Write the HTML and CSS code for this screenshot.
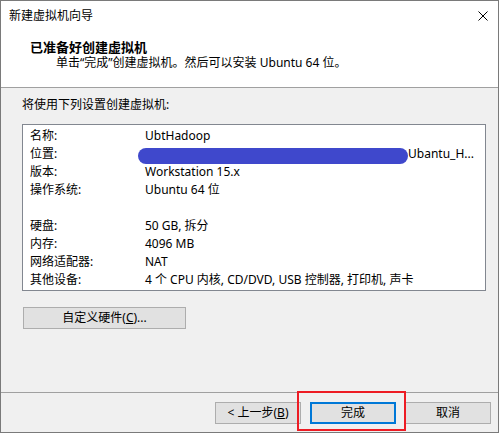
FILE: index.html
```html
<!DOCTYPE html>
<html lang="zh-CN">
<head>
<meta charset="utf-8">
<title>新建虚拟机向导</title>
<link rel="stylesheet" href="styles.css">
</head>
<body>
<div class="window">
  <div class="top">
    <div class="titlebar">
      <span class="title">新建虚拟机向导</span>
      <svg class="close" width="10" height="10" viewBox="0 0 10 10"><path d="M0.5 0.5 L9.5 9.5 M9.5 0.5 L0.5 9.5" stroke="#000" stroke-width="1" fill="none"/></svg>
    </div>
    <div class="header">
      <div class="heading">已准备好创建虚拟机</div>
      <div class="sub">单击“完成”创建虚拟机。然后可以安装 Ubuntu 64 位。</div>
    </div>
  </div>
  <div class="main">
    <div class="intro">将使用下列设置创建虚拟机:</div>
    <div class="summary">
      <div class="row"><span class="label">名称:</span><span class="value">UbtHadoop</span></div>
      <div class="row"><span class="label">位置:</span><span class="value"><span class="redact"></span>Ubantu_H...</span></div>
      <div class="row"><span class="label">版本:</span><span class="value">Workstation 15.x</span></div>
      <div class="row"><span class="label">操作系统:</span><span class="value">Ubuntu 64 位</span></div>
      <div class="spacer"></div>
      <div class="row"><span class="label">硬盘:</span><span class="value">50 GB, 拆分</span></div>
      <div class="row"><span class="label">内存:</span><span class="value">4096 MB</span></div>
      <div class="row"><span class="label">网络适配器:</span><span class="value">NAT</span></div>
      <div class="row"><span class="label">其他设备:</span><span class="value">4 个 CPU 内核, CD/DVD, USB 控制器, 打印机, 声卡</span></div>
    </div>
    <div class="btn custom">自定义硬件(<u>C</u>)...</div>
  </div>
  <div class="footer">
    <div class="btn nav">&lt; 上一步(<u>B</u>)</div>
    <div class="btn nav primary">完成</div>
    <div class="btn nav">取消</div>
  </div>
  <div class="highlight"></div>
</div>
</body>
</html>
```

FILE: styles.css
```css
* { box-sizing: border-box; }
html, body { margin: 0; padding: 0; background: #f0f0f0; }
body {
  font-family: "Noto Sans", "Noto Sans CJK SC", sans-serif;
  font-size: 12px;
  color: #000;
}
.window {
  position: relative;
  width: 499px;
  height: 433px;
  border: 1px solid #7a7a7a;
  background: #f0f0f0;
  display: flex;
  flex-direction: column;
}
.top {
  background: #fff;
  border-bottom: 1px solid #a0a0a0;
  height: 87px;
}
.titlebar {
  height: 29px;
  display: flex;
  align-items: center;
  justify-content: space-between;
  padding: 1px 10px 0 8px;
}
.title { line-height: 28px; }
.close { display: block; }
.header { padding: 9px 0 0 29px; }
.heading { font-weight: bold; font-size: 13px; line-height: 16px; }
.sub { line-height: 16px; padding-left: 26px; }
.main {
  flex: 1;
  padding: 9px 12px 0 21px;
}
.intro { line-height: 16px; }
.summary {
  margin-top: 11px;
  width: 464px;
  height: 167px;
  background: #fff;
  border: 1px solid #828790;
  padding: 2px 0 0 7px;
  overflow: hidden;
}
.row {
  display: flex;
  height: 18px;
  line-height: 18px;
  white-space: nowrap;
}
.label { width: 115px; flex: none; }
.value { flex: none; display: flex; align-items: center; }
.spacer { height: 18px; }
.redact {
  display: inline-block;
  width: 270px;
  height: 16px;
  margin-left: -7px;
  margin-top: 3px;
  border-radius: 8px;
  background: #3f48cc;
}
.btn {
  background: #e1e1e1;
  border: 1px solid #adadad;
  text-align: center;
  height: 22px;
  line-height: 20px;
}
.custom {
  margin: 16px 0 0 1px;
  width: 163px;
}
.footer {
  height: 40px;
  border-top: 1px solid #a0a0a0;
  display: flex;
  justify-content: flex-end;
  gap: 9px;
  padding: 9px 7px 0 0;
}
.nav { width: 86px; }
.primary { border: 2px solid #0078d7; line-height: 18px; }
.highlight {
  position: absolute;
  left: 296px;
  top: 390px;
  width: 109px;
  height: 40px;
  border: 2px solid #ed1c24;
}
```
